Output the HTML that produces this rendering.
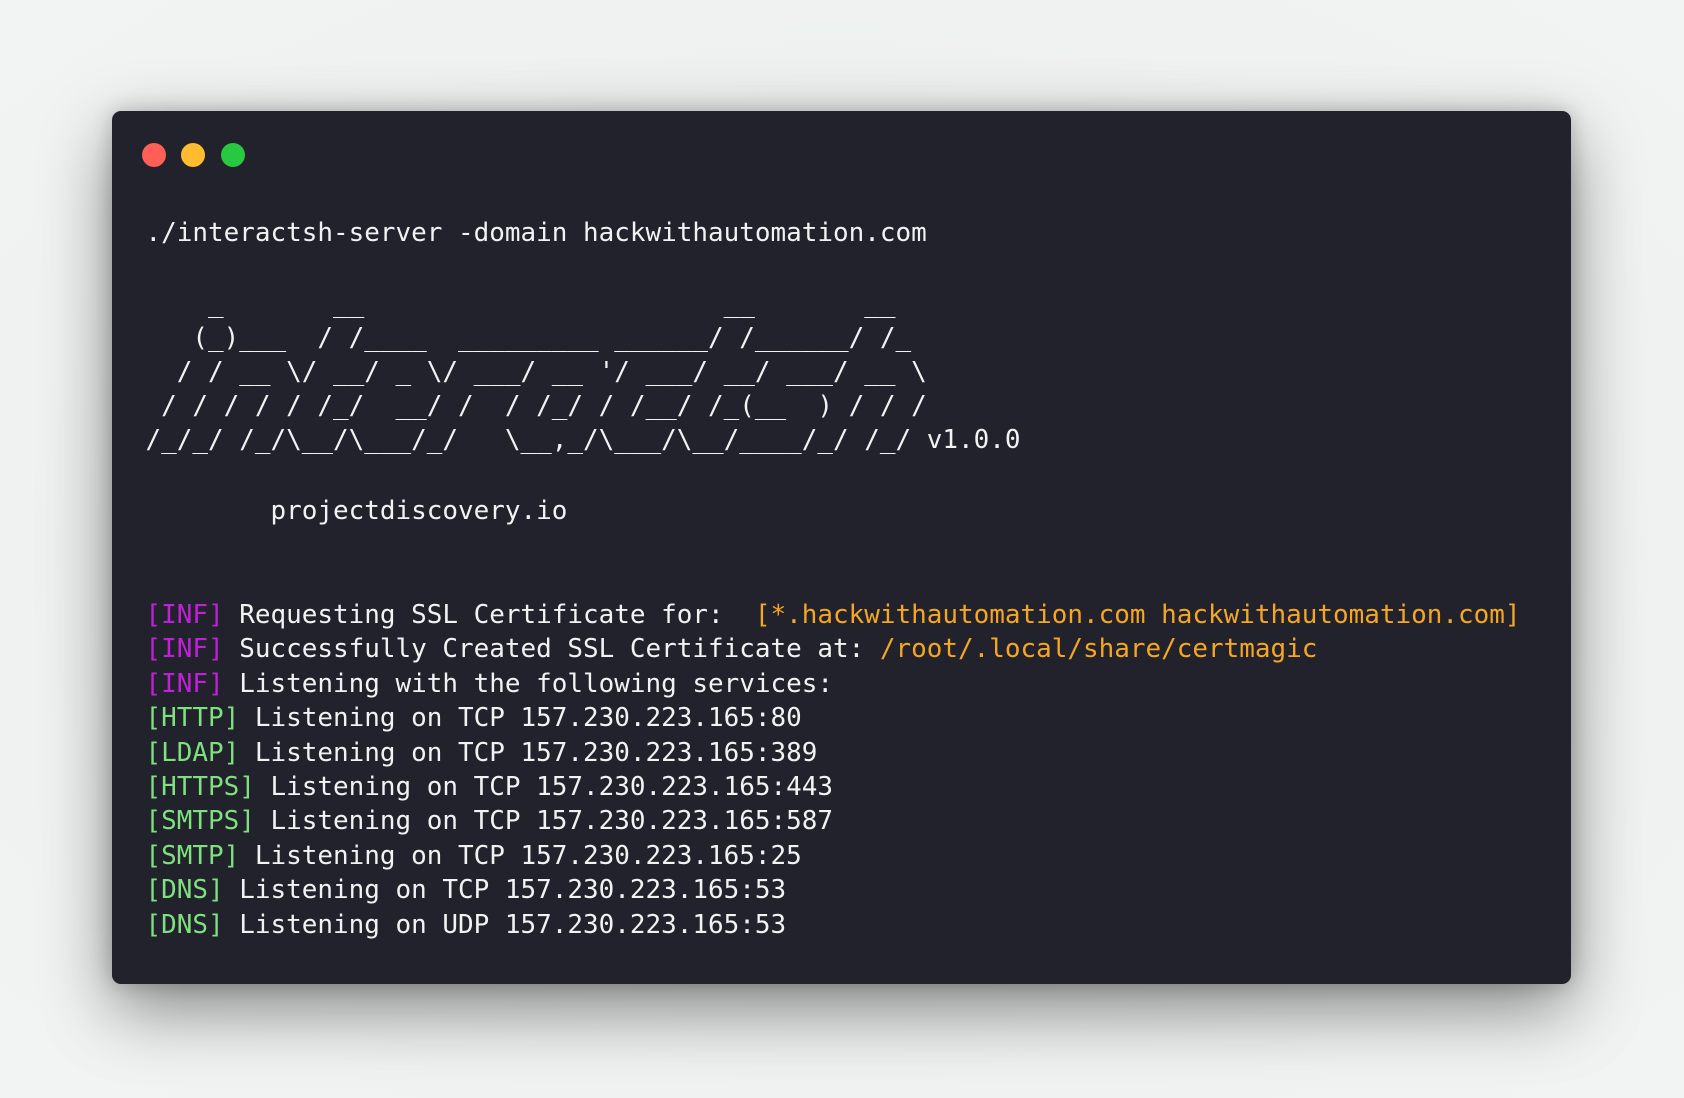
<!DOCTYPE html>
<html><head><meta charset="utf-8"><style>
html,body{margin:0;padding:0;width:1684px;height:1098px;overflow:hidden;background:#eef1f0;}
body{background:radial-gradient(ellipse at center,#e4e7e6 0%,#eff2f1 70%,#f2f4f3 100%);}
.win{position:absolute;left:112px;top:111px;width:1459px;height:873px;background:#22222c;border-radius:9px;box-shadow:0 25px 70px rgba(0,0,0,0.45),0 0 20px rgba(0,0,0,0.2);}
.dot{position:absolute;top:143px;width:24px;height:24px;border-radius:50%;}
pre{position:absolute;left:145.5px;margin:0;font-family:"DejaVu Sans Mono","Liberation Mono",monospace;font-size:25.96px;color:#f2f2f2;white-space:pre;}
.p{color:#c21fd9}.o{color:#f5a623}.g{color:#7ee07e}
</style></head><body>
<div class="win"></div>
<div class="dot" style="left:142px;background:#ff5f57"></div>
<div class="dot" style="left:181px;background:#febc2e"></div>
<div class="dot" style="left:221px;background:#28c840"></div>
<pre style="top:216px;line-height:34px">./interactsh-server -domain hackwithautomation.com</pre>
<pre style="top:287px;line-height:34px">    _       __                       __       __
   (_)___  / /____  _________ ______/ /______/ /_
  / / __ \/ __/ _ \/ ___/ __ '/ ___/ __/ ___/ __ \
 / / / / / /_/  __/ /  / /_/ / /__/ /_(__  ) / / /
/_/_/ /_/\__/\___/_/   \__,_/\___/\__/____/_/ /_/ v1.0.0</pre>
<pre style="top:494px;line-height:34px">        projectdiscovery.io</pre>
<pre style="top:598px;line-height:34.4px"><span class="p">[INF]</span> Requesting SSL Certificate for:  <span class="o">[*.hackwithautomation.com hackwithautomation.com]</span>
<span class="p">[INF]</span> Successfully Created SSL Certificate at: <span class="o">/root/.local/share/certmagic</span>
<span class="p">[INF]</span> Listening with the following services:
<span class="g">[HTTP]</span> Listening on TCP 157.230.223.165:80
<span class="g">[LDAP]</span> Listening on TCP 157.230.223.165:389
<span class="g">[HTTPS]</span> Listening on TCP 157.230.223.165:443
<span class="g">[SMTPS]</span> Listening on TCP 157.230.223.165:587
<span class="g">[SMTP]</span> Listening on TCP 157.230.223.165:25
<span class="g">[DNS]</span> Listening on TCP 157.230.223.165:53
<span class="g">[DNS]</span> Listening on UDP 157.230.223.165:53</pre>
</body></html>
